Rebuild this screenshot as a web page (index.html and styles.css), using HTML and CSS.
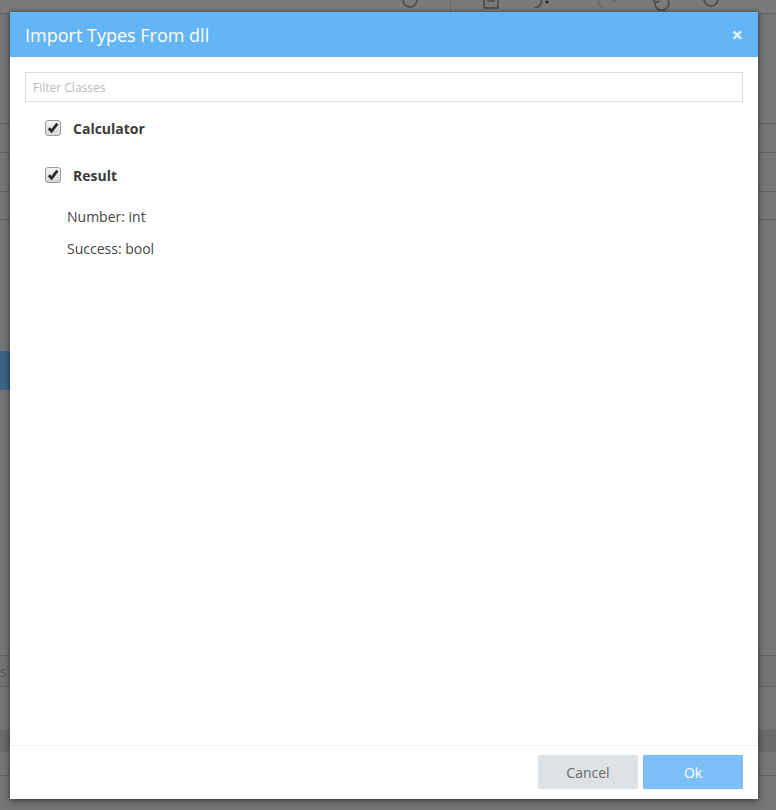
FILE: index.html
```html
<!DOCTYPE html>
<html>
<head>
<meta charset="utf-8">
<link rel="stylesheet" href="styles.css">
</head>
<body>
<div class="app">
  <div class="toolbar">
    <div class="tools">
      <svg class="tool" width="24" height="14" viewBox="0 0 24 14"><circle cx="12" cy="0" r="7" fill="none" stroke="#4a4a4a" stroke-width="1.6"/></svg>
      <span class="tsep"></span>
      <svg class="tool" width="24" height="14" viewBox="0 0 24 14"><rect x="5" y="-4" width="14" height="12" fill="none" stroke="#4a4a4a" stroke-width="1.6"/><line x1="8" y1="1" x2="16" y2="1" stroke="#4a4a4a" stroke-width="1.4"/></svg>
      <svg class="tool" width="34" height="14" viewBox="0 0 34 14"><path d="M6 8 Q14 6 12 -2" fill="none" stroke="#4a4a4a" stroke-width="1.6"/><circle cx="18" cy="2" r="1.6" fill="#222"/></svg>
      <svg class="tool" width="34" height="14" viewBox="0 0 34 14"><path d="M14 -4 Q4 2 14 8" fill="none" stroke="#6a6a6a" stroke-width="1.6"/><path d="M22 0 l3 3 l3 -3z" fill="#6a6a6a"/></svg>
      <svg class="tool" width="24" height="14" viewBox="0 0 24 14"><path d="M6 2 A7 7 0 1 0 16 -3" fill="none" stroke="#4a4a4a" stroke-width="1.6"/><path d="M4 -2 l2 5 l4 -2" fill="none" stroke="#4a4a4a" stroke-width="1.6"/></svg>
      <svg class="tool" width="24" height="14" viewBox="0 0 24 14"><circle cx="12" cy="-1" r="7" fill="none" stroke="#4a4a4a" stroke-width="1.6"/></svg>
    </div>
  </div>
  <div class="row r1"></div>
  <div class="row r2"></div>
  <div class="row r3"></div>
  <div class="row r4"></div>
  <div class="row r5"><span class="bluebtn">b</span></div>
  <div class="row r6"><span class="rowtxt">s</span></div>
  <div class="row r7"></div>
  <div class="row r8"></div>
  <div class="row r9"></div>
  <div class="row r10"></div>
</div>

<div class="modal">
  <div class="modal-header">
    <span class="modal-title">Import Types From dll</span>
    <span class="modal-close">×</span>
  </div>
  <div class="modal-body">
    <input class="filter" type="text" placeholder="Filter Classes">
    <ul class="classes">
      <li class="cls">
        <span class="check"><svg width="12" height="12" viewBox="0 0 12 12"><path d="M1.8 6.2 L4.6 9.2 L10.4 1.6" fill="none" stroke="#2a2a2a" stroke-width="2.8" stroke-linejoin="miter"/></svg></span>
        <span class="cls-name">Calculator</span>
      </li>
      <li class="cls">
        <span class="check"><svg width="12" height="12" viewBox="0 0 12 12"><path d="M1.8 6.2 L4.6 9.2 L10.4 1.6" fill="none" stroke="#2a2a2a" stroke-width="2.8" stroke-linejoin="miter"/></svg></span>
        <span class="cls-name">Result</span>
      </li>
    </ul>
    <ul class="props">
      <li>Number: int</li>
      <li>Success: bool</li>
    </ul>
  </div>
  <div class="modal-footer">
    <button class="btn btn-cancel">Cancel</button>
    <button class="btn btn-ok">Ok</button>
  </div>
</div>
</body>
</html>
```
FILE: styles.css
```css
html, body {
  margin: 0;
  padding: 0;
}
body {
  width: 776px;
  height: 810px;
  overflow: hidden;
  background: #767676;
  font-family: "Open Sans", "Liberation Sans", sans-serif;
  position: relative;
}
.app {
  display: flex;
  flex-direction: column;
}
.toolbar {
  height: 14px;
  border-bottom: 1px solid #646464;
  background: #7a7a7a;
  box-sizing: border-box;
  position: relative;
  overflow: hidden;
}
.tools {
  position: absolute;
  left: 398px;
  top: 0;
  display: flex;
  align-items: flex-start;
  gap: 26px;
}
.tool { display: block; }
.tsep {
  width: 1px;
  height: 14px;
  background: #666;
  margin: 0 2px;
}
.row {
  box-sizing: border-box;
  border-bottom: 1px solid #626262;
  position: relative;
}
.r1 { height: 110px; }
.r2 { height: 29px; }
.r3 { height: 39px; }
.r4 { height: 28px; }
.r5 { height: 436px; }
.bluebtn {
  position: absolute;
  left: -8px;
  top: 131px;
  width: 30px;
  height: 39px;
  background: #3e6488;
  color: #8a9fb4;
  font-size: 16px;
  line-height: 39px;
  text-align: right;
}
.r6 { height: 31px; background: #747474; }
.rowtxt {
  position: absolute;
  left: 0;
  top: 5px;
  color: #5a5a5a;
  font-size: 15px;
}
.r7 { height: 43px; border-bottom: none; }
.r8 { height: 22px; background: #6b6b6b; border-bottom: none; }
.r9 { height: 24px; }
.r10 { height: 34px; border-bottom: none; }

.modal {
  position: absolute;
  left: 10px;
  top: 12px;
  width: 748px;
  height: 787px;
  background: #fff;
  display: flex;
  flex-direction: column;
  box-shadow: 0 0 4px rgba(0,0,0,0.45), 0 3px 8px rgba(0,0,0,0.3);
}
.modal-header {
  height: 45px;
  background: #64b5f6;
  display: flex;
  align-items: center;
  justify-content: space-between;
  padding: 0 15px 0 15px;
  flex: none;
}
.modal-title {
  color: #fff;
  font-size: 18px;
}
.modal-close {
  color: #e6f2fd;
  font-size: 20px;
  font-weight: 700;
  line-height: 1;
}
.modal-body {
  flex: 1;
  padding: 15px 15px 0 15px;
  border-bottom: 1px solid #f1f1f1;
}
.filter {
  display: block;
  width: 100%;
  box-sizing: border-box;
  height: 30px;
  border: 1px solid #dcdcdc;
  padding: 0 7px;
  font-family: "Open Sans", "Liberation Sans", sans-serif;
  font-size: 12px;
  color: #555;
  outline: none;
}
.filter::placeholder { color: #b9b9b9; }
.classes {
  list-style: none;
  margin: 18px 0 0 20px;
  padding: 0;
  display: flex;
  flex-direction: column;
  gap: 31px;
}
.cls {
  display: flex;
  align-items: center;
  height: 16px;
  gap: 12px;
}
.check {
  width: 16px;
  height: 16px;
  box-sizing: border-box;
  border: 1px solid #9a9a9a;
  border-radius: 3px;
  background: linear-gradient(#f4f4f4, #d6d6d6);
  display: flex;
  align-items: center;
  justify-content: center;
}
.check svg { display: block; }
.cls-name {
  font-size: 14px;
  font-weight: 700;
  color: #3b3b3b;
}
.props {
  list-style: none;
  margin: 24px 0 0 42px;
  padding: 0;
  display: flex;
  flex-direction: column;
  gap: 13px;
}
.props li {
  font-size: 14px;
  color: #444;
  line-height: 19px;
}
.modal-footer {
  flex: none;
  height: 53px;
  display: flex;
  justify-content: flex-end;
  align-items: flex-start;
  padding: 9px 15px 0 0;
  box-sizing: border-box;
  gap: 5px;
}
.btn {
  width: 100px;
  height: 34px;
  border: none;
  font-family: "Open Sans", "Liberation Sans", sans-serif;
  font-size: 14px;
  padding: 0;
}
.btn-cancel {
  background: #dfe2e5;
  color: #6a6a6a;
}
.btn-ok {
  background: #7cbff7;
  color: #fff;
}
```
